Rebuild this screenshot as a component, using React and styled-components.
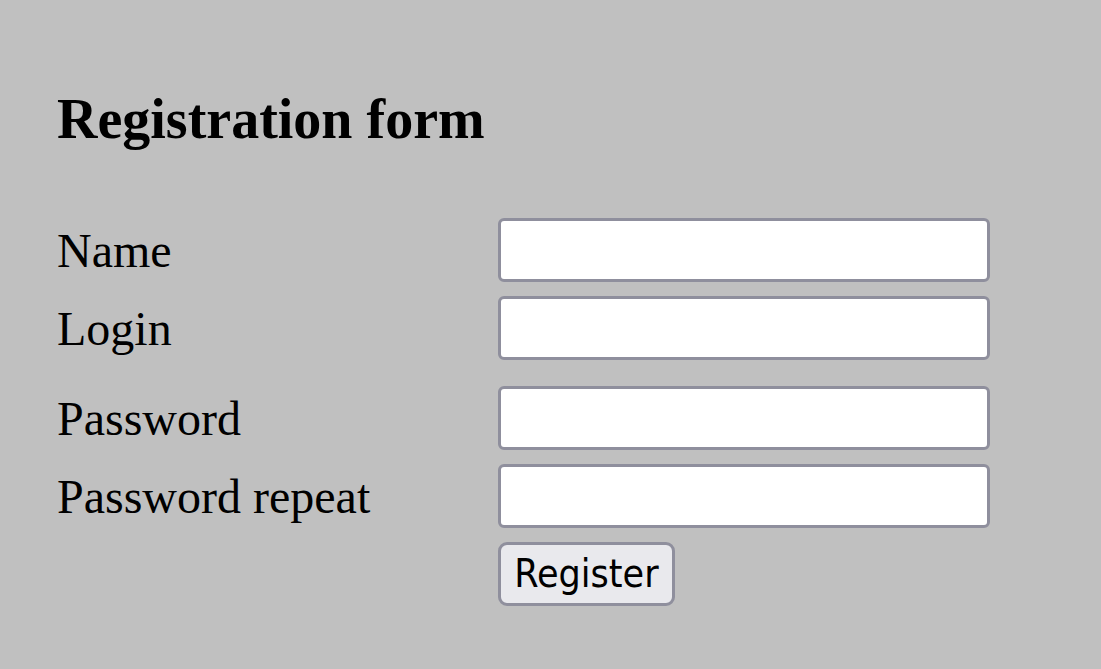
import React from "react";
import styled, { createGlobalStyle } from "styled-components";

const Global = createGlobalStyle`
  html, body { margin: 0; padding: 0; background: #c0c0c0; }
  body { font-family: "Liberation Serif", "Times New Roman", serif; color: #000; }
`;

const Page = styled.main`
  min-height: 669px;
  box-sizing: border-box;
  padding: 87px 0 0 57px;
  background: #c0c0c0;
`;

const Heading = styled.h3`
  margin: 0 0 67px;
  font-size: 56px;
  font-weight: bold;
  line-height: 64px;
`;

const Form = styled.form`
  display: flex;
  flex-direction: column;
`;

const Row = styled.div`
  display: grid;
  grid-template-columns: 441px 492px;
  align-items: center;
  height: 64px;
  margin-top: ${(p) => (p.$first ? 0 : p.$spaced ? 26 : 14)}px;
`;

const Label = styled.label`
  font-size: 48px;
  line-height: 55px;
`;

const Input = styled.input`
  box-sizing: border-box;
  width: 492px;
  height: 64px;
  border: 3px solid #8f8f9d;
  border-radius: 6px;
  background: #fff;
  padding: 3px 6px;
  font-size: 40px;
  outline: none;
`;

const Button = styled.button`
  grid-column: 2;
  justify-self: start;
  box-sizing: border-box;
  width: 177px;
  height: 64px;
  padding: 0 0 2px;
  border: 3px solid #8f8f9d;
  border-radius: 9px;
  background: #e9e9ed;
  color: #000;
  font-family: "DejaVu Sans Condensed", "DejaVu Sans", sans-serif;
  font-size: 39px;
  cursor: pointer;
`;

const fields = [
  { id: "name", label: "Name", type: "text" },
  { id: "login", label: "Login", type: "text" },
  { id: "password", label: "Password", type: "password", spaced: true },
  { id: "password2", label: "Password repeat", type: "password" },
];

export default function App() {
  return (
    <>
      <Global />
      <Page>
        <Heading>Registration form</Heading>
        <Form onSubmit={(e) => e.preventDefault()}>
          {fields.map((f, i) => (
            <Row key={f.id} $first={i === 0} $spaced={f.spaced}>
              <Label htmlFor={f.id}>{f.label}</Label>
              <Input id={f.id} type={f.type} />
            </Row>
          ))}
          <Row>
            <Button type="submit">Register</Button>
          </Row>
        </Form>
      </Page>
    </>
  );
}
